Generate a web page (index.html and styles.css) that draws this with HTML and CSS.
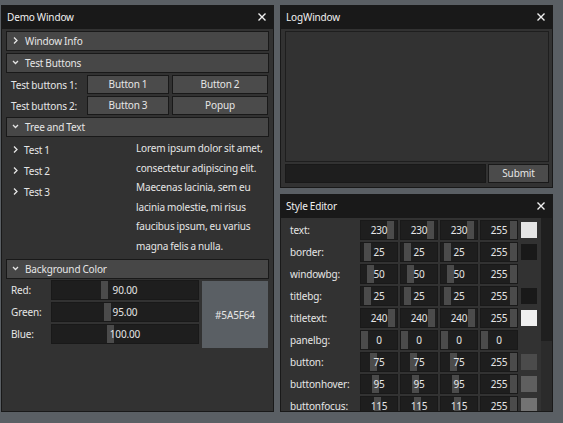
FILE: index.html
```html
<!DOCTYPE html>
<html lang="en">
<head>
<meta charset="utf-8">
<title>Demo</title>
<link rel="stylesheet" href="styles.css">
</head>
<body>
<div class="desktop">
  <section class="window demo">
    <header class="titlebar">
      <span class="title">Demo Window</span>
      <svg class="close" viewBox="0 0 8 8"><path d="M0.5 0.5L7.5 7.5M7.5 0.5L0.5 7.5"/></svg>
    </header>
    <div class="demo-body">
      <div class="header"><svg class="chev" viewBox="0 0 7 7"><path d="M2 0.5L5 3.5L2 6.5"/></svg>Window Info</div>
      <div class="header"><svg class="chev" viewBox="0 0 7 7"><path d="M1 2L3.5 4.5L6 2"/></svg>Test Buttons</div>
      <div class="btn-row">
        <span class="row-label">Test buttons 1:</span>
        <button class="btn b1">Button 1</button>
        <button class="btn b2">Button 2</button>
      </div>
      <div class="btn-row">
        <span class="row-label">Test buttons 2:</span>
        <button class="btn b1">Button 3</button>
        <button class="btn b2">Popup</button>
      </div>
      <div class="header"><svg class="chev" viewBox="0 0 7 7"><path d="M1 2L3.5 4.5L6 2"/></svg>Tree and Text</div>
      <div class="tree-text">
        <ul class="tree">
          <li><svg class="chev" viewBox="0 0 7 7"><path d="M2 0.5L5 3.5L2 6.5"/></svg>Test 1</li>
          <li><svg class="chev" viewBox="0 0 7 7"><path d="M2 0.5L5 3.5L2 6.5"/></svg>Test 2</li>
          <li><svg class="chev" viewBox="0 0 7 7"><path d="M2 0.5L5 3.5L2 6.5"/></svg>Test 3</li>
        </ul>
        <p class="lorem">Lorem ipsum dolor sit amet,<br>consectetur adipiscing elit.<br>Maecenas lacinia, sem eu<br>lacinia molestie, mi risus<br>faucibus ipsum, eu varius<br>magna felis a nulla.</p>
      </div>
      <div class="header"><svg class="chev" viewBox="0 0 7 7"><path d="M1 2L3.5 4.5L6 2"/></svg>Background Color</div>
      <div class="color-edit">
        <div class="channels">
          <div class="channel"><span class="ch-label">Red:</span><div class="slider" style="--v:90"><span class="grab"></span><span class="val">90.00</span></div></div>
          <div class="channel"><span class="ch-label">Green:</span><div class="slider" style="--v:95"><span class="grab"></span><span class="val">95.00</span></div></div>
          <div class="channel"><span class="ch-label">Blue:</span><div class="slider" style="--v:100"><span class="grab"></span><span class="val">100.00</span></div></div>
        </div>
        <div class="preview">#5A5F64</div>
      </div>
    </div>
  </section>

  <div class="side">
    <section class="window log">
      <header class="titlebar">
        <span class="title">LogWindow</span>
        <svg class="close" viewBox="0 0 8 8"><path d="M0.5 0.5L7.5 7.5M7.5 0.5L0.5 7.5"/></svg>
      </header>
      <div class="log-body">
        <div class="log-area"></div>
        <div class="log-input">
          <input class="input" type="text">
          <button class="btn submit">Submit</button>
        </div>
      </div>
    </section>

    <section class="window style-editor">
      <header class="titlebar">
        <span class="title">Style Editor</span>
        <svg class="close" viewBox="0 0 8 8"><path d="M0.5 0.5L7.5 7.5M7.5 0.5L0.5 7.5"/></svg>
      </header>
      <div class="se-body">
        <div class="se-rows">
          <div class="se-row"><span class="se-label">text:</span>
            <div class="field" style="--v:230"><span class="grab"></span><span class="val">230</span></div>
            <div class="field" style="--v:230"><span class="grab"></span><span class="val">230</span></div>
            <div class="field" style="--v:230"><span class="grab"></span><span class="val">230</span></div>
            <div class="field" style="--v:255"><span class="grab"></span><span class="val">255</span></div>
            <span class="swatch" style="background:rgb(230,230,230)"></span></div>
          <div class="se-row"><span class="se-label">border:</span>
            <div class="field" style="--v:25"><span class="grab"></span><span class="val">25</span></div>
            <div class="field" style="--v:25"><span class="grab"></span><span class="val">25</span></div>
            <div class="field" style="--v:25"><span class="grab"></span><span class="val">25</span></div>
            <div class="field" style="--v:255"><span class="grab"></span><span class="val">255</span></div>
            <span class="swatch" style="background:rgb(25,25,25)"></span></div>
          <div class="se-row"><span class="se-label">windowbg:</span>
            <div class="field" style="--v:50"><span class="grab"></span><span class="val">50</span></div>
            <div class="field" style="--v:50"><span class="grab"></span><span class="val">50</span></div>
            <div class="field" style="--v:50"><span class="grab"></span><span class="val">50</span></div>
            <div class="field" style="--v:255"><span class="grab"></span><span class="val">255</span></div>
            <span class="swatch" style="background:rgb(50,50,50)"></span></div>
          <div class="se-row"><span class="se-label">titlebg:</span>
            <div class="field" style="--v:25"><span class="grab"></span><span class="val">25</span></div>
            <div class="field" style="--v:25"><span class="grab"></span><span class="val">25</span></div>
            <div class="field" style="--v:25"><span class="grab"></span><span class="val">25</span></div>
            <div class="field" style="--v:255"><span class="grab"></span><span class="val">255</span></div>
            <span class="swatch" style="background:rgb(25,25,25)"></span></div>
          <div class="se-row"><span class="se-label">titletext:</span>
            <div class="field" style="--v:240"><span class="grab"></span><span class="val">240</span></div>
            <div class="field" style="--v:240"><span class="grab"></span><span class="val">240</span></div>
            <div class="field" style="--v:240"><span class="grab"></span><span class="val">240</span></div>
            <div class="field" style="--v:255"><span class="grab"></span><span class="val">255</span></div>
            <span class="swatch" style="background:rgb(240,240,240)"></span></div>
          <div class="se-row"><span class="se-label">panelbg:</span>
            <div class="field" style="--v:0"><span class="grab"></span><span class="val">0</span></div>
            <div class="field" style="--v:0"><span class="grab"></span><span class="val">0</span></div>
            <div class="field" style="--v:0"><span class="grab"></span><span class="val">0</span></div>
            <div class="field" style="--v:0"><span class="grab"></span><span class="val">0</span></div>
            <span class="swatch" style="background:transparent"></span></div>
          <div class="se-row"><span class="se-label">button:</span>
            <div class="field" style="--v:75"><span class="grab"></span><span class="val">75</span></div>
            <div class="field" style="--v:75"><span class="grab"></span><span class="val">75</span></div>
            <div class="field" style="--v:75"><span class="grab"></span><span class="val">75</span></div>
            <div class="field" style="--v:255"><span class="grab"></span><span class="val">255</span></div>
            <span class="swatch" style="background:rgb(75,75,75)"></span></div>
          <div class="se-row"><span class="se-label">buttonhover:</span>
            <div class="field" style="--v:95"><span class="grab"></span><span class="val">95</span></div>
            <div class="field" style="--v:95"><span class="grab"></span><span class="val">95</span></div>
            <div class="field" style="--v:95"><span class="grab"></span><span class="val">95</span></div>
            <div class="field" style="--v:255"><span class="grab"></span><span class="val">255</span></div>
            <span class="swatch" style="background:rgb(95,95,95)"></span></div>
          <div class="se-row"><span class="se-label">buttonfocus:</span>
            <div class="field" style="--v:115"><span class="grab"></span><span class="val">115</span></div>
            <div class="field" style="--v:115"><span class="grab"></span><span class="val">115</span></div>
            <div class="field" style="--v:115"><span class="grab"></span><span class="val">115</span></div>
            <div class="field" style="--v:255"><span class="grab"></span><span class="val">255</span></div>
            <span class="swatch" style="background:rgb(115,115,115)"></span></div>
        </div>
        <div class="scrollbar"><span class="thumb"></span></div>
      </div>
    </section>
  </div>
</div>
</body>
</html>
```

FILE: styles.css
```css
* { box-sizing: border-box; }

html, body { margin: 0; padding: 0; }

body {
  width: 563px;
  height: 423px;
  overflow: hidden;
  background: #5a5f64;
  font-family: "Noto Sans", "DejaVu Sans", sans-serif;
  font-size: 10px;
  letter-spacing: -0.15px;
  word-spacing: -0.4px;
  color: #e6e6e6;
}

.desktop {
  display: flex;
  gap: 6px;
  padding: 5px 0 0 1px;
}

/* ---- window chrome ---- */
.window {
  display: flex;
  flex-direction: column;
  background: #323232;
  border: 1px solid #191919;
  overflow: hidden;
}

.titlebar {
  flex: none;
  height: 23px;
  display: flex;
  align-items: center;
  justify-content: space-between;
  padding: 0 7px 1px 5px;
  background: #191919;
  color: #f0f0f0;
}

.close {
  width: 8px;
  height: 8px;
  fill: none;
  stroke: #f0f0f0;
  stroke-width: 1.4;
}

.chev {
  flex: none;
  width: 7px;
  height: 7px;
  fill: none;
  stroke: #e6e6e6;
  stroke-width: 1.3;
}

/* ---- demo window ---- */
.demo {
  width: 273px;
  height: 407px;
}

.demo-body {
  display: flex;
  flex-direction: column;
  gap: 2px;
  padding: 2px 4px 0 4px;
}

.header {
  height: 20px;
  display: flex;
  align-items: center;
  gap: 6px;
  padding-left: 5px;
  padding-bottom: 1px;
  background: #474747;
  border: 1px solid #191919;
}

.btn-row {
  height: 19px;
  display: flex;
  align-items: stretch;
}

.row-label {
  width: 81px;
  padding-left: 5px;
  display: flex;
  align-items: center;
  white-space: nowrap;
}

.btn {
  font: inherit;
  letter-spacing: inherit;
  word-spacing: inherit;
  color: #e6e6e6;
  background: #4b4b4b;
  border: 1px solid #191919;
  padding: 0 0 1px;
  margin: 0;
}

.btn.b1 { width: 82px; }
.btn.b2 { width: 96px; margin-left: 3px; }

.tree-text {
  height: 118px;
  display: flex;
}

.tree {
  list-style: none;
  margin: 0;
  padding: 0 0 0 6px;
  width: 130px;
  flex: none;
}

.tree li {
  height: 21px;
  display: flex;
  align-items: center;
  gap: 5px;
}

.lorem {
  margin: 0;
  line-height: 19.6px;
  white-space: nowrap;
}

.color-edit {
  display: flex;
  gap: 3px;
  margin-top: -1px;
}

.channels {
  display: flex;
  flex-direction: column;
  gap: 2px;
}

.channel {
  display: flex;
  height: 20px;
}

.ch-label {
  width: 45px;
  padding-left: 5px;
  display: flex;
  align-items: center;
}

.slider {
  position: relative;
  width: 148px;
  background: #1e1e1e;
  border: 1px solid #191919;
  display: flex;
  align-items: center;
  justify-content: center;
}

.grab {
  position: absolute;
  top: 0;
  bottom: 0;
  width: 7px;
  background: #4b4b4b;
}

.slider .grab { left: calc(var(--v) / 255 * 139px); }

.val { position: relative; }

.preview {
  width: 66px;
  height: 67px;
  margin-top: 1px;
  background: #5a5f64;
  display: flex;
  align-items: center;
  justify-content: center;
}

/* ---- right column ---- */
.side {
  display: flex;
  flex-direction: column;
  gap: 6px;
  width: 273px;
}

.log { height: 183px; }

.log-body {
  flex: 1;
  display: flex;
  flex-direction: column;
  gap: 2px;
  padding: 2px 3px 4px 4px;
}

.log-area {
  flex: 1;
  background: #323232;
  border: 1px solid #1e1e1e;
}

.log-input {
  height: 19px;
  display: flex;
  gap: 2px;
}

.input {
  flex: 1;
  margin: 0;
  background: #1e1e1e;
  border: 1px solid #191919;
  outline: none;
}

.btn.submit { width: 61px; }

.style-editor { height: 218px; }

.se-body {
  flex: 1;
  display: flex;
  min-height: 0;
}

.se-rows {
  flex: 1;
  display: flex;
  flex-direction: column;
  gap: 2px;
  padding: 2px 0 0 9px;
  overflow: hidden;
}

.se-row {
  flex: none;
  height: 20px;
  display: flex;
  align-items: center;
  gap: 2px;
}

.se-label { width: 68px; }

.field {
  position: relative;
  width: 38px;
  height: 20px;
  background: #1e1e1e;
  border: 1px solid #191919;
  display: flex;
  align-items: center;
  justify-content: center;
}

.field .grab { left: calc(var(--v) / 255 * 29px); }

.swatch {
  width: 16px;
  height: 16px;
  margin-left: 1px;
}

.scrollbar {
  flex: none;
  width: 11px;
  background: #2b2b2b;
}

.thumb {
  display: block;
  height: 123px;
  background: #1f1f1f;
}
```
